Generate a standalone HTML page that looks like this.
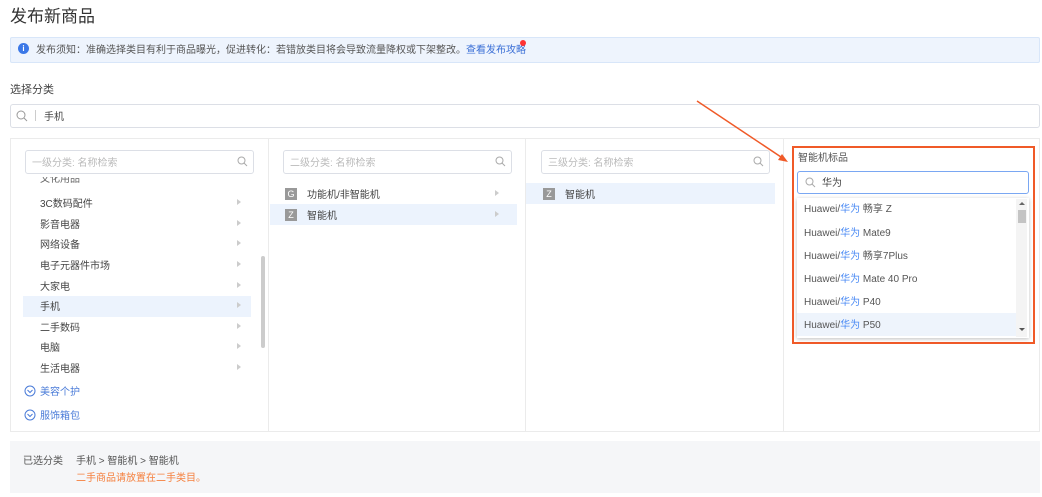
<!DOCTYPE html><html><head><meta charset="utf-8"><style>
*{box-sizing:border-box;margin:0;padding:0}
body{width:1042px;height:497px;background:#fff;font-family:"Liberation Sans","Noto Sans CJK SC",sans-serif;color:#333;position:relative;overflow:hidden;font-size:10px}
.a{position:absolute}
.t{white-space:nowrap;line-height:1;padding-top:2px}
.inp{position:absolute;border:1px solid #dcdfe6;border-radius:3px;background:#fff}
.ph{color:#bbb;font-size:10px}
.it{font-size:10px;color:#444}
.arr{position:absolute;width:0;height:0;border-left:4px solid #ccc;border-top:3.5px solid transparent;border-bottom:3.5px solid transparent}
.hl{position:absolute;background:#ecf3fd}
.ico{position:absolute;width:12px;height:12px;background:#999;color:#fff;font-size:9px;text-align:center;line-height:12px}
.dd{font-size:10px;color:#555}
.dd b{font-weight:normal;color:#4a8af4}
</style></head><body>
<div class="a t" style="left:10px;top:6px;font-size:17px;color:#333">发布新商品</div>
<div class="a" style="left:10px;top:37px;width:1030px;height:26px;background:#eef4fd;border:1px solid #d8e6f9;border-radius:2px"></div>
<div class="a" style="left:18px;top:43px;width:11px;height:11px;border-radius:50%;background:#3b78e7;color:#fff;font-size:8px;text-align:center;line-height:11px;font-weight:bold">i</div>
<div class="a t" style="left:36px;top:44px;font-size:10px;color:#555">发布须知：准确选择类目有利于商品曝光，促进转化：若错放类目将会导致流量降权或下架整改。<span style="color:#3b6fd6">查看发布攻略</span></div>
<div class="a" style="left:520px;top:40px;width:6px;height:6px;border-radius:50%;background:#f33"></div>
<div class="a t" style="left:10px;top:83px;font-size:11px;color:#444">选择分类</div>
<div class="inp" style="left:10px;top:104px;width:1030px;height:24px"></div>
<svg class="a" style="left:16px;top:110px" width="12" height="12"><circle cx="5" cy="5" r="4" fill="none" stroke="#999" stroke-width="1"/><line x1="8" y1="8" x2="11" y2="11" stroke="#999"/></svg>
<div class="a" style="left:35px;top:110px;width:1px;height:11px;background:#ccc"></div>
<div class="a t" style="left:44px;top:111px;font-size:10px;color:#444">手机</div>
<div class="a" style="left:10px;top:138px;width:1030px;height:294px;border:1px solid #ebebeb"></div>
<div class="a" style="left:268px;top:138px;width:1px;height:294px;background:#ebebeb"></div>
<div class="a" style="left:525px;top:138px;width:1px;height:294px;background:#ebebeb"></div>
<div class="a" style="left:783px;top:138px;width:1px;height:294px;background:#ebebeb"></div>
<!-- col1 -->
<div class="inp" style="left:25px;top:150px;width:229px;height:24px"></div>
<div class="a t ph" style="left:32px;top:157px">一级分类: 名称检索</div>
<svg class="a" style="left:237px;top:156px" width="11" height="11"><circle cx="4.5" cy="4.5" r="3.5" fill="none" stroke="#aaa"/><line x1="7" y1="7" x2="10" y2="10" stroke="#aaa"/></svg>
<div class="a" style="left:23px;top:177px;width:240px;height:10px;overflow:hidden"><div class="t it" style="position:absolute;left:17px;top:-4px;color:#666">文化用品</div></div>
<div class="hl" style="left:23px;top:296px;width:228px;height:21px"></div>
<div class="a t it" style="left:40px;top:198px">3C数码配件</div>
<div class="a t it" style="left:40px;top:219px">影音电器</div>
<div class="a t it" style="left:40px;top:239px">网络设备</div>
<div class="a t it" style="left:40px;top:260px">电子元器件市场</div>
<div class="a t it" style="left:40px;top:281px">大家电</div>
<div class="a t it" style="left:40px;top:301px">手机</div>
<div class="a t it" style="left:40px;top:322px">二手数码</div>
<div class="a t it" style="left:40px;top:342px">电脑</div>
<div class="a t it" style="left:40px;top:363px">生活电器</div>
<div class="arr" style="left:237px;top:199px"></div><div class="arr" style="left:237px;top:220px"></div><div class="arr" style="left:237px;top:240px"></div><div class="arr" style="left:237px;top:261px"></div><div class="arr" style="left:237px;top:282px"></div><div class="arr" style="left:237px;top:302px"></div><div class="arr" style="left:237px;top:323px"></div><div class="arr" style="left:237px;top:343px"></div><div class="arr" style="left:237px;top:364px"></div>
<div class="a" style="left:261px;top:256px;width:4px;height:92px;background:#ccc;border-radius:2px"></div>
<svg class="a" style="left:24px;top:385px" width="12" height="12"><circle cx="6" cy="6" r="5" fill="none" stroke="#4a7bd8"/><path d="M3.5 5l2.5 2.5 2.5-2.5" fill="none" stroke="#4a7bd8"/></svg>
<div class="a t" style="left:40px;top:386px;font-size:10px;color:#4a7bd8">美容个护</div>
<svg class="a" style="left:24px;top:409px" width="12" height="12"><circle cx="6" cy="6" r="5" fill="none" stroke="#4a7bd8"/><path d="M3.5 5l2.5 2.5 2.5-2.5" fill="none" stroke="#4a7bd8"/></svg>
<div class="a t" style="left:40px;top:410px;font-size:10px;color:#4a7bd8">服饰箱包</div>
<!-- col2 -->
<div class="inp" style="left:283px;top:150px;width:229px;height:24px"></div>
<div class="a t ph" style="left:290px;top:157px">二级分类: 名称检索</div>
<svg class="a" style="left:495px;top:156px" width="11" height="11"><circle cx="4.5" cy="4.5" r="3.5" fill="none" stroke="#aaa"/><line x1="7" y1="7" x2="10" y2="10" stroke="#aaa"/></svg>
<div class="hl" style="left:270px;top:204px;width:247px;height:21px"></div>
<div class="ico" style="left:285px;top:188px">G</div>
<div class="a t it" style="left:307px;top:189px">功能机/非智能机</div>
<div class="ico" style="left:285px;top:209px">Z</div>
<div class="a t it" style="left:307px;top:210px">智能机</div>
<div class="arr" style="left:495px;top:190px"></div><div class="arr" style="left:495px;top:211px"></div>
<!-- col3 -->
<div class="inp" style="left:541px;top:150px;width:229px;height:24px"></div>
<div class="a t ph" style="left:548px;top:157px">三级分类: 名称检索</div>
<svg class="a" style="left:753px;top:156px" width="11" height="11"><circle cx="4.5" cy="4.5" r="3.5" fill="none" stroke="#aaa"/><line x1="7" y1="7" x2="10" y2="10" stroke="#aaa"/></svg>
<div class="hl" style="left:526px;top:183px;width:249px;height:21px"></div>
<div class="ico" style="left:543px;top:188px">Z</div>
<div class="a t it" style="left:565px;top:189px">智能机</div>
<!-- arrow -->
<svg class="a" style="left:690px;top:95px" width="105" height="75"><line x1="7" y1="6" x2="94" y2="64" stroke="#f05a28" stroke-width="1.5"/><path d="M98 67l-10-2 4-6z" fill="#f05a28"/></svg>
<!-- col4 -->
<div class="a" style="left:792px;top:146px;width:243px;height:198px;border:2px solid #f05a28"></div>
<div class="a t" style="left:798px;top:152px;font-size:10px;color:#555">智能机标品</div>
<div class="a" style="left:797px;top:171px;width:232px;height:23px;border:1px solid #7aa7f2;border-radius:3px"></div>
<svg class="a" style="left:805px;top:177px" width="11" height="11"><circle cx="4.5" cy="4.5" r="3.5" fill="none" stroke="#aaa"/><line x1="7" y1="7" x2="10" y2="10" stroke="#aaa"/></svg>
<div class="a t" style="left:822px;top:177px;font-size:10px;color:#444">华为</div>
<div class="a" style="left:797px;top:198px;width:232px;height:140px;background:#fff;box-shadow:0 1px 4px rgba(0,0,0,.25)"></div>
<div class="hl" style="left:797px;top:313px;width:219px;height:23px;background:#eef4fc"></div>
<div class="a t dd" style="left:804px;top:203px">Huawei/<b>华为</b> 畅享 Z</div>
<div class="a t dd" style="left:804px;top:227px">Huawei/<b>华为</b> Mate9</div>
<div class="a t dd" style="left:804px;top:250px">Huawei/<b>华为</b> 畅享7Plus</div>
<div class="a t dd" style="left:804px;top:273px">Huawei/<b>华为</b> Mate 40 Pro</div>
<div class="a t dd" style="left:804px;top:296px">Huawei/<b>华为</b> P40</div>
<div class="a t dd" style="left:804px;top:319px">Huawei/<b>华为</b> P50</div>
<div class="a" style="left:1016px;top:199px;width:11px;height:138px;background:#f4f4f4"></div>
<div class="a" style="left:1018px;top:210px;width:8px;height:13px;background:#c4c4c4"></div>
<div class="a" style="left:1019px;top:202px;border-left:3px solid transparent;border-right:3px solid transparent;border-bottom:3px solid #666"></div>
<div class="a" style="left:1019px;top:328px;border-left:3px solid transparent;border-right:3px solid transparent;border-top:3px solid #555"></div>
<!-- bottom -->
<div class="a" style="left:10px;top:441px;width:1030px;height:52px;background:#f5f6f8"></div>
<div class="a t" style="left:23px;top:455px;font-size:10px;color:#555">已选分类</div>
<div class="a t" style="left:76px;top:455px;font-size:10px;color:#555">手机 &gt; 智能机 &gt; 智能机</div>
<div class="a t" style="left:76px;top:472px;font-size:10px;color:#f5803e">二手商品请放置在二手类目。</div>
</body></html>
